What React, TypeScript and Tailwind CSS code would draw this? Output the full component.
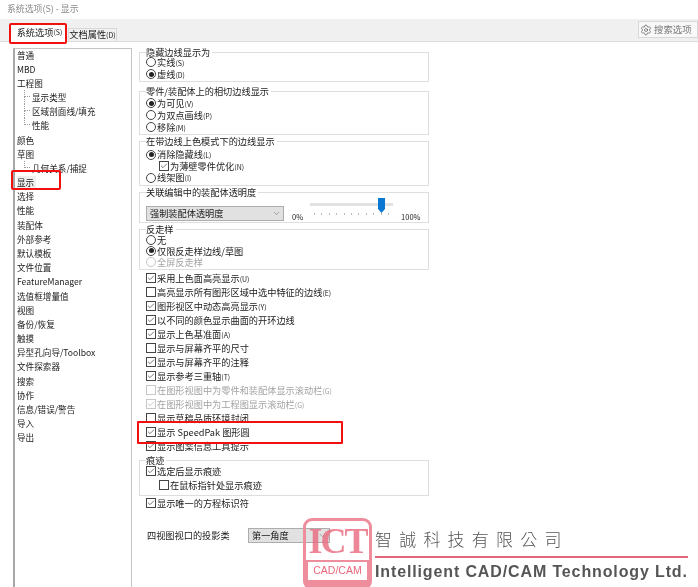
import { Settings, ChevronDown, Check as CheckIcon } from 'lucide-react';

const treeItems: { label: string; child?: boolean; last?: boolean; selected?: boolean }[] = [
  { label: '普通' },
  { label: 'MBD' },
  { label: '工程图' },
  { label: '显示类型', child: true },
  { label: '区域剖面线/填充', child: true },
  { label: '性能', child: true, last: true },
  { label: '颜色' },
  { label: '草图' },
  { label: '几何关系/捕捉', child: true, last: true },
  { label: '显示', selected: true },
  { label: '选择' },
  { label: '性能' },
  { label: '装配体' },
  { label: '外部参考' },
  { label: '默认模板' },
  { label: '文件位置' },
  { label: 'FeatureManager' },
  { label: '选值框增量值' },
  { label: '视图' },
  { label: '备份/恢复' },
  { label: '触摸' },
  { label: '异型孔向导/Toolbox' },
  { label: '文件探索器' },
  { label: '搜索' },
  { label: '协作' },
  { label: '信息/错误/警告' },
  { label: '导入' },
  { label: '导出' },
];

const checks: { label: string; key?: string; on?: boolean; disabled?: boolean }[] = [
  { label: '采用上色面高亮显示', key: '(U)', on: true },
  { label: '高亮显示所有图形区域中选中特征的边线', key: '(E)' },
  { label: '图形视区中动态高亮显示', key: '(Y)', on: true },
  { label: '以不同的颜色显示曲面的开环边线', on: true },
  { label: '显示上色基准面', key: '(A)', on: true },
  { label: '显示与屏幕齐平的尺寸' },
  { label: '显示与屏幕齐平的注释', on: true },
  { label: '显示参考三重轴', key: '(T)', on: true },
  { label: '在图形视图中为零件和装配体显示滚动栏', key: '(G)', disabled: true },
  { label: '在图形视图中为工程图显示滚动栏', key: '(G)', on: true, disabled: true },
  { label: '显示草稿品质环境封闭' },
  { label: '显示 SpeedPak 图形圆', on: true },
  { label: '显示图案信息工具提示', on: true },
];

function Key({ text }: { text?: string }) {
  if (!text) return null;
  return <span className="text-[7px]">{text}</span>;
}

function Check({ label, keyText, on, disabled, h, indent }: { label: string; keyText?: string; on?: boolean; disabled?: boolean; h: string; indent?: boolean }) {
  return (
    <div className={`flex items-center gap-[1px] whitespace-nowrap ${h} ${indent ? 'pl-[13px]' : ''} ${disabled ? 'text-[#a3a3a3]' : ''}`}>
      <span className={`flex w-[10px] h-[10px] shrink-0 items-center justify-center border bg-white ${disabled ? 'border-[#c8c8c8]' : 'border-[#444]'}`}>
        {on && <CheckIcon size={8} strokeWidth={2} className={`shrink-0 ${disabled ? 'text-[#aaa]' : 'text-[#333]'}`} />}
      </span>
      <span className="leading-[10px]">
        {label}
        <Key text={keyText} />
      </span>
    </div>
  );
}

function Radio({ label, keyText, on, disabled, h }: { label: string; keyText?: string; on?: boolean; disabled?: boolean; h: string }) {
  return (
    <div className={`flex items-center gap-[1px] whitespace-nowrap ${h} ${disabled ? 'text-[#a3a3a3]' : ''}`}>
      <span className={`flex w-[10px] h-[10px] shrink-0 items-center justify-center rounded-full border bg-white ${disabled ? 'border-[#c8c8c8]' : 'border-[#444]'}`}>
        {on && <span className="w-[5px] h-[5px] rounded-full bg-[#222]" />}
      </span>
      <span className="leading-[10px]">
        {label}
        <Key text={keyText} />
      </span>
    </div>
  );
}

function Group({ title, className, children }: { title: string; className: string; children: React.ReactNode }) {
  return (
    <fieldset className={`border border-[#dedede] pl-[6px] ${className}`}>
      <legend className="pr-[2px] text-[9.2px] leading-[10px]">{title}</legend>
      {children}
    </fieldset>
  );
}

function Dropdown({ label, className }: { label: string; className: string }) {
  return (
    <div className={`flex items-center justify-between border border-[#adadad] bg-[#e1e1e1] pl-[3px] pr-[2px] ${className}`}>
      <span>{label}</span>
      <ChevronDown size={9} strokeWidth={1.2} className="text-[#555]" />
    </div>
  );
}

function Logo() {
  return (
    <div className="absolute left-[303px] top-[518px] flex w-[395px] gap-[3px]">
      <div className="flex h-[72px] w-[69px] shrink-0 flex-col rounded-[9px] border-[3px] border-[#ee8d9c]">
        <div className="flex h-[39px] items-center justify-center text-[36px] font-bold leading-none tracking-[-2px] text-[#e8687c]/80 [font-family:'Liberation_Serif',serif]">
          ICT
        </div>
        <div className="flex flex-1 bg-[#ee8d9c] px-[2px] pt-[2px]">
          <div className="flex h-[18px] w-full items-center justify-center bg-white text-[10.5px] text-[#e8687c] [font-family:'Liberation_Sans',sans-serif]">
            CAD/CAM
          </div>
        </div>
      </div>
      <div className="flex flex-col pt-[10px] text-[#555]">
        <div className="text-[17px] font-light leading-[22px] tracking-[7.2px] [font-family:'Noto_Sans_CJK_TC',sans-serif]">智誠科技有限公司</div>
        <div className="mt-[6px] h-[2px] w-[313px] bg-[#e2667c]" />
        <div className="mt-[4px] whitespace-nowrap text-[16px] font-bold leading-[20px] tracking-[0.87px] [font-family:'Liberation_Sans',sans-serif]">
          Intelligent CAD/CAM Technology Ltd.
        </div>
      </div>
    </div>
  );
}

export default function App() {
  return (
    <div className="relative h-[587px] w-[698px] overflow-hidden bg-white text-[9.2px] text-[#1a1a1a] blur-[0.3px] [font-family:'Noto_Sans_CJK_SC','Noto_Sans',sans-serif]">
      {/* Title */}
      <div className="flex h-[19px] items-center pb-[2px] pl-[7px] text-[8.9px] text-[#8a8a8a]">系统选项(S) - 显示</div>

      {/* Tabs */}
      <div className="flex h-[23px] items-end justify-between border-b border-[#dcdcdc] bg-[#f0f0f0] pl-[10px]">
        <div className="flex items-end">
          <div className="-mb-px flex h-[19px] w-[57px] items-center justify-center bg-white pl-[2px] text-[9.2px]">
            系统选项<Key text="(S)" />
          </div>
          <div className="ml-[1px] flex h-[13px] w-[49px] items-center justify-center border border-b-0 border-[#d8d8d8] text-[9.2px]">
            文档属性<Key text="(D)" />
          </div>
        </div>
        <div className="mb-[3px] flex h-[17px] w-[60px] items-center gap-[2px] border border-[#d8d8d8] bg-[#f8f8f8] pl-[1px] text-[#777]">
          <Settings size={12} strokeWidth={1.2} className="text-[#444]" />
          <span className="text-[9.4px]">搜索选项</span>
        </div>
      </div>

      <div className="flex pl-[13px]">
        {/* Tree */}
        <div className="mt-[6px] h-[560px] w-[119px] shrink-0 border border-l-2 border-[#c4c4c4] border-l-[#a8a8a8] pl-[2px] text-[8.6px]">
          <div className="-mt-[1.5px]">
            {treeItems.map((item, i) => (
              <div key={i} className={`flex h-[14.18px] items-center whitespace-nowrap ${item.child ? 'pl-[7px]' : ''}`}>
                {item.child && (
                  <div className="mr-[2px] flex h-full w-[6px] flex-col">
                    <div className="h-1/2 border-b border-l border-dotted border-[#999]" />
                    {!item.last && <div className="h-1/2 border-l border-dotted border-[#999]" />}
                  </div>
                )}
                <span className={`leading-[12px] ${item.selected ? 'bg-[#efefef] pr-[2px]' : ''}`}>{item.label}</span>
              </div>
            ))}
          </div>
        </div>

        {/* Options */}
        <div className="ml-[7px] mt-[5px] w-[290px]">
          <Group title="隐藏边线显示为" className="h-[35px]">
            <div className="-mt-px">
              <Radio label="实线" keyText="(S)" h="h-[12px]" />
              <Radio label="虚线" keyText="(D)" on h="h-[12px]" />
            </div>
          </Group>
          <Group title="零件/装配体上的相切边线显示" className="mt-[4px] h-[49px]">
            <div className="mt-px">
              <Radio label="为可见" keyText="(V)" on h="h-[12px]" />
              <Radio label="为双点画线" keyText="(P)" h="h-[12px]" />
              <Radio label="移除" keyText="(M)" h="h-[12px]" />
            </div>
          </Group>
          <Group title="在带边线上色模式下的边线显示" className="mt-px h-[50px]">
            <div className="mt-[3px]">
              <Radio label="消除隐藏线" keyText="(L)" on h="h-[11.5px]" />
              <Check label="为薄壁零件优化" keyText="(N)" on h="h-[11.5px]" indent />
              <Radio label="线架图" keyText="(I)" h="h-[11.5px]" />
            </div>
          </Group>
          <Group title="关联编辑中的装配体透明度" className="mt-px h-[36px]">
            <div className="flex">
              <Dropdown label="强制装配体透明度" className="mt-[9px] h-[15px] w-[138px]" />
              <span className="ml-[8px] mt-[15px] text-[7.5px] leading-[10px]">0%</span>
              <div className="relative ml-[7px] mt-px h-[20px] w-[83px]">
                <div className="absolute left-0 right-0 top-[5px] h-[3px] bg-[#e2e2e2]" />
                <svg className="absolute left-[68px] top-0" width="8" height="15" viewBox="0 0 8 15">
                  <path d="M0 0H7V11L3.5 15L0 11Z" fill="#0a78d2" />
                </svg>
                <div className="absolute left-[4px] top-[15px] flex w-[75px] justify-between">
                  {[0, 1, 2, 3, 4, 5, 6, 7, 8, 9, 10].map((n) => (
                    <span key={n} className="h-[2px] w-px bg-[#bbb]" />
                  ))}
                </div>
              </div>
              <span className="ml-[8px] mt-[15px] text-[7.5px] leading-[10px]">100%</span>
            </div>
          </Group>
          <Group title="反走样" className="mt-px h-[46px]">
            <Radio label="无" h="h-[11px]" />
            <Radio label="仅限反走样边线/草图" on h="h-[11px]" />
            <Radio label="全屏反走样" disabled h="h-[11px]" />
          </Group>

          <div className="mt-px pl-[7px]">
            {checks.map((c) => (
              <Check key={c.label} label={c.label} keyText={c.key} on={c.on} disabled={c.disabled} h="h-[14px]" />
            ))}
          </div>

          <Group title="痕迹" className="mt-[2px] h-[41px]">
            <div className="-mt-px">
              <Check label="选定后显示痕迹" on h="h-[14px]" />
              <Check label="在鼠标指针处显示痕迹" h="h-[14px]" indent />
            </div>
          </Group>

          <div className="pl-[7px]">
            <Check label="显示唯一的方程标识符" on h="h-[14px]" />
          </div>

          <div className="mt-[18px] flex items-center pl-[8px]">
            <span className="w-[101px]">四视图视口的投影类</span>
            <Dropdown label="第一角度" className="h-[15px] w-[82px]" />
          </div>
        </div>
      </div>

      <Logo />

      {/* Red callouts */}
      <div className="absolute left-[9px] top-[23px] h-[21px] w-[58px] rounded-[2px] border-2 border-[#f01010]" />
      <div className="absolute left-[11px] top-[170px] h-[20px] w-[50px] rounded-[2px] border-2 border-[#f01010]" />
      <div className="absolute left-[137px] top-[421px] h-[23px] w-[206px] rounded-[1px] border-2 border-[#f01010]" />
    </div>
  );
}
